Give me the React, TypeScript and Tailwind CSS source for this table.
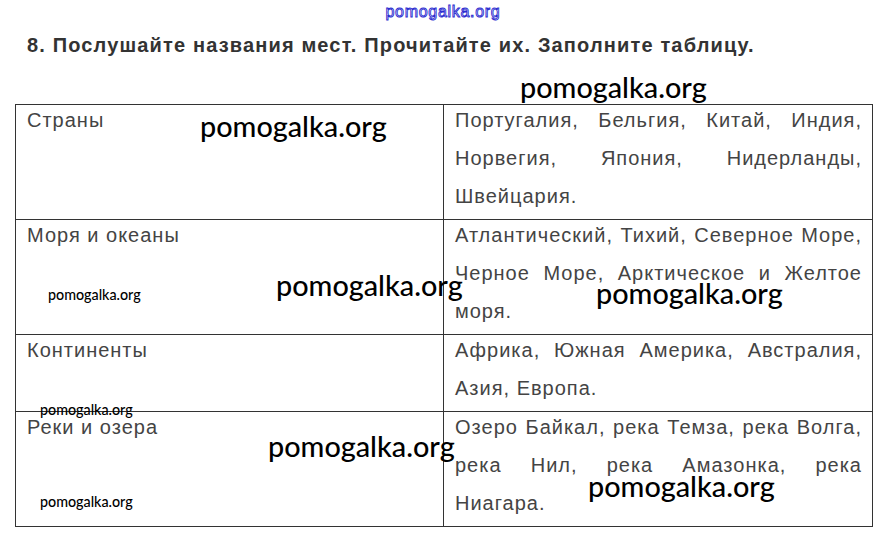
const rows = [
  {
    name: "Страны",
    items: "Португалия, Бельгия, Китай, Индия, Норвегия, Япония, Нидерланды, Швейцария.",
  },
  {
    name: "Моря и океаны",
    items: "Атлантический, Тихий, Северное Море, Черное Море, Арктическое и Желтое моря.",
  },
  {
    name: "Континенты",
    items: "Африка, Южная Америка, Австралия, Азия, Европа.",
  },
  {
    name: "Реки и озера",
    items: "Озеро Байкал, река Темза, река Волга, река Нил, река Амазонка, река Ниагара.",
  },
]

// watermarks that sit on top of the page
const marks = [
  { x: "left-[520px] top-[70px]", big: true },
  { x: "left-[200px] top-[109px]", big: true },
  { x: "left-[276px] top-[268px]", big: true },
  { x: "left-[596px] top-[276px]", big: true },
  { x: "left-[268px] top-[429px]", big: true },
  { x: "left-[588px] top-[469px]", big: true },
  { x: "left-[48px] top-[286px]", big: false },
  { x: "left-[40px] top-[401px]", big: false },
  { x: "left-[40px] top-[493px]", big: false },
]

function App() {
  return (
    <div className="relative w-[886px] h-[540px] bg-white overflow-hidden font-['Liberation_Sans',Arial,sans-serif]">
      <div className="flex justify-center pt-[2px] h-[24px]">
        <span className="text-[16px] leading-[20px] text-transparent [-webkit-text-stroke:0.9px_#2b2bd0] tracking-[0.7px]">
          pomogalka.org
        </span>
      </div>
      <h2 className="pl-[27px] pt-[9px] text-[20px] leading-[24px] font-bold text-[#333] tracking-[1.15px]">
        8. Послушайте названия мест. Прочитайте их. Заполните таблицу.
      </h2>

      <div className="ml-[15px] mt-[47px] w-[858px] grid grid-cols-[428px_1fr] border border-[#333] text-[20px] text-[#444] leading-[38px] tracking-[1px]">
        {rows.map((r, i) => (
          <div key={r.name} className="contents">
            <div className={`pl-[11px] border-r border-[#333] ${i > 0 ? "border-t" : ""}`}>
              <p className="-mt-[4px] pb-[4px]">{r.name}</p>
            </div>
            <div className={`pl-[11px] pr-[10px] border-[#333] ${i > 0 ? "border-t" : ""}`}>
              <p className="-mt-[4px] pb-[4px] text-justify">{r.items}</p>
            </div>
          </div>
        ))}
      </div>

      {marks.map((m, i) => (
        <span
          key={i}
          className={`absolute ${m.x} font-['Lato',sans-serif] text-black font-medium ${
            m.big ? "text-[28.8px] leading-[34px]" : "text-[14.3px] leading-[18px]"
          }`}
        >
          pomogalka.org
        </span>
      ))}
    </div>
  )
}

export default App
